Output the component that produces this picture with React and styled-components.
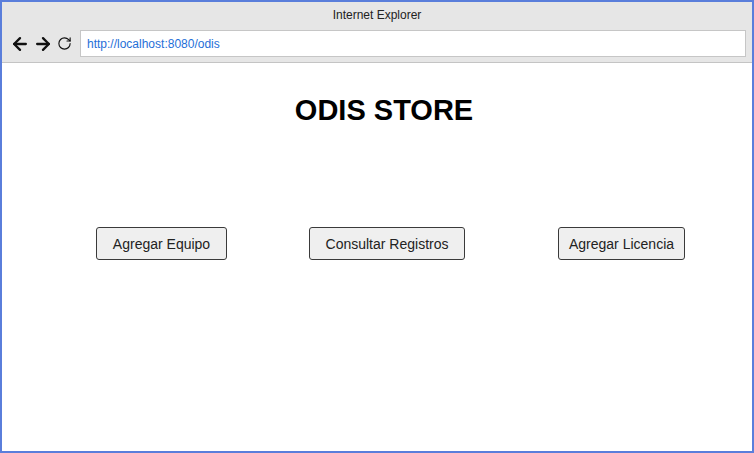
import React from 'react';
import styled, { createGlobalStyle } from 'styled-components';
import { ArrowLeft, ArrowRight, RotateCw } from 'lucide-react';

const GlobalStyle = createGlobalStyle`
  html, body {
    margin: 0;
    padding: 0;
    background: #ffffff;
  }
  * {
    box-sizing: border-box;
  }
`;

const Frame = styled.div`
  width: 754px;
  height: 453px;
  border: 2px solid #5a7edb;
  display: flex;
  flex-direction: column;
  font-family: 'Liberation Sans', Arial, sans-serif;
  background: #ffffff;
`;

const Chrome = styled.div`
  background: #e6e6e6;
  border-bottom: 1px solid #c4c4c4;
  display: flex;
  flex-direction: column;
`;

const TitleBar = styled.div`
  height: 26px;
  display: flex;
  align-items: center;
  justify-content: center;
  font-size: 12px;
  color: #222;
`;

const NavRow = styled.div`
  height: 34px;
  display: flex;
  align-items: center;
  padding: 0 6px 3px 6px;
`;

const NavButton = styled.span`
  display: flex;
  align-items: center;
  justify-content: center;
  width: ${p => p.w || 23}px;
  height: 20px;
  color: #111;
`;

const Address = styled.div`
  flex: 1;
  height: 27px;
  margin-left: 6px;
  background: #fff;
  border: 1px solid #c6c6c6;
  display: flex;
  align-items: center;
  padding-left: 6px;
  font-size: 12px;
  color: #1f6fd8;
`;

const Page = styled.div`
  flex: 1;
  display: flex;
  flex-direction: column;
`;

const Heading = styled.h1`
  margin: 30px 0 0 0;
  padding-left: 14px;
  text-align: center;
  font-size: 29px;
  font-weight: bold;
  color: #000;
  line-height: 34px;
`;

const ButtonRow = styled.div`
  display: flex;
  margin-top: 100px;
`;

const ActionButton = styled.button`
  margin-left: ${p => p.offset}px;
  height: 33px;
  width: ${p => p.w}px;
  background: #efefef;
  border: 1px solid #3a3a3a;
  border-radius: 3px;
  font-family: 'Liberation Sans', Arial, sans-serif;
  font-size: 14px;
  color: #222;
  padding: 0;
  cursor: pointer;
`;

const buttons = [
  { label: 'Agregar Equipo', offset: 94, w: 131 },
  { label: 'Consultar Registros', offset: 82, w: 156 },
  { label: 'Agregar Licencia', offset: 93, w: 127 },
];

export default function App() {
  return (
    <>
      <GlobalStyle />
      <Frame>
        <Chrome>
          <TitleBar>Internet Explorer</TitleBar>
          <NavRow>
            <NavButton><ArrowLeft size={20} strokeWidth={2.8} /></NavButton>
            <NavButton><ArrowRight size={20} strokeWidth={2.8} /></NavButton>
            <NavButton w={20}><RotateCw size={15} strokeWidth={1.8} /></NavButton>
            <Address>http://localhost:8080/odis</Address>
          </NavRow>
        </Chrome>
        <Page>
          <Heading>ODIS STORE</Heading>
          <ButtonRow>
            {buttons.map(b => (
              <ActionButton key={b.label} offset={b.offset} w={b.w} type="button">
                {b.label}
              </ActionButton>
            ))}
          </ButtonRow>
        </Page>
      </Frame>
    </>
  );
}
